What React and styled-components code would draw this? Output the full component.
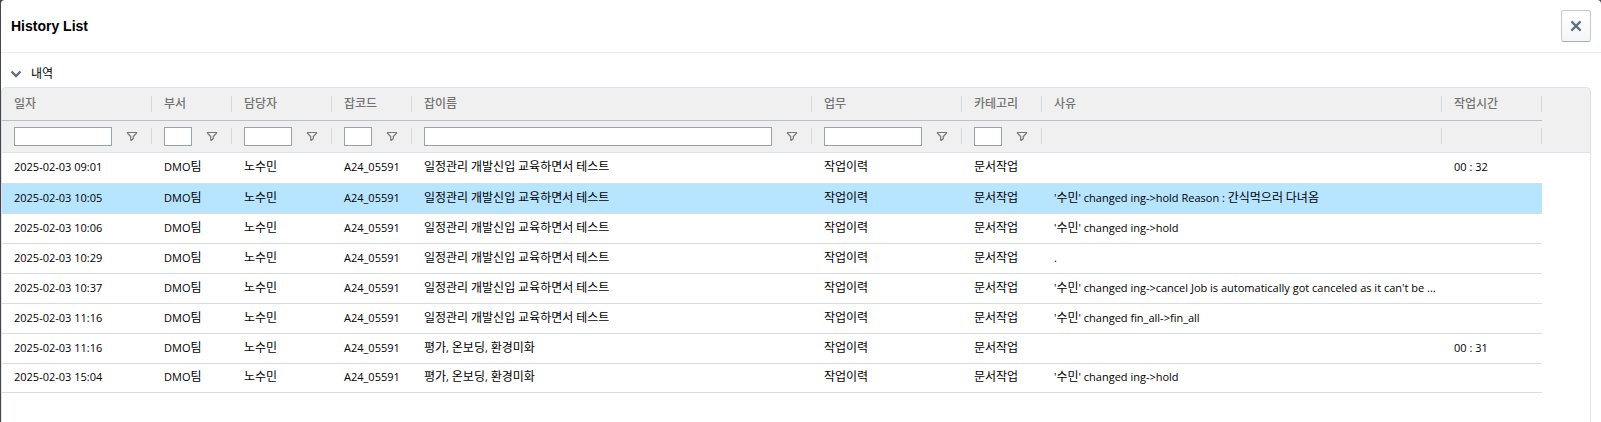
import React from "react";
import styled, { createGlobalStyle } from "styled-components";

const GlobalStyle = createGlobalStyle`
  * { box-sizing: border-box; }
  body {
    margin: 0;
    background: #45474d;
    font-family: "Open Sans", "Noto Sans CJK KR", sans-serif;
    font-size: 11px;
    color: #000;
  }
`;

const Dialog = styled.section`
  min-height: 100vh;
  margin-left: 1px;
  background: #fff;
  border-radius: 4px 4px 0 0;
  display: flex;
  flex-direction: column;
`;

const DialogHeader = styled.header`
  display: flex;
  align-items: center;
  justify-content: space-between;
  height: 53px;
  padding: 0 10px;
  border-bottom: 1px solid #edeeef;
`;

const DialogTitle = styled.h1`
  margin: 0;
  font: bold 14px "Liberation Sans", sans-serif;
`;

const CloseButton = styled.button`
  display: flex;
  align-items: center;
  justify-content: center;
  width: 30px;
  height: 32px;
  padding: 0;
  border: 1px solid #c4c7cb;
  border-bottom-color: #abadb3;
  border-radius: 3px;
  background: linear-gradient(#fff, #f3f6f8);
`;

const SectionToggle = styled.button`
  display: flex;
  align-items: center;
  align-self: flex-start;
  gap: 9px;
  height: 34px;
  padding: 8px 9px 0;
  border: 0;
  background: none;
  font-family: inherit;
  font-size: 12px;
  line-height: 16px;
  color: #000;
`;

const Grid = styled.div`
  flex: 1;
  margin-right: 10px;
  border: 1px solid #dde2eb;
  border-bottom: 0;
  border-radius: 5px 5px 0 0;
  overflow: hidden;
  background: linear-gradient(#f0f0f0, #f0f0f0) top / 100% 64px no-repeat,
    linear-gradient(#dde2eb, #dde2eb) 0 64px / 100% 1px no-repeat;
`;

const Table = styled.table`
  width: 1540px;
  table-layout: fixed;
  border-collapse: separate;
  border-spacing: 0;
`;

const HeadCell = styled.th`
  height: 32px;
  padding: 0 12px;
  text-align: left;
  font-size: 12px;
  font-weight: 500;
  line-height: 16px;
  color: #737373;
  background: linear-gradient(#d3d6da, #d3d6da) right center / 1px 16px no-repeat;
`;

const FilterCell = styled.td`
  height: 33px;
  padding: 0 12px;
  border-top: 1px solid #babfc7;
  border-bottom: 1px solid #dde2eb;
  background: linear-gradient(#d3d6da, #d3d6da) right 7px / 1px 16px no-repeat;
`;

const FilterGroup = styled.div`
  display: flex;
  align-items: center;
  gap: 12px;
`;

const FilterInput = styled.input`
  flex: 1;
  min-width: 0;
  height: 19px;
  padding: 0 4px;
  border: 1px solid #95a5a6;
  border-radius: 0;
  background: #fff;
  font: inherit;
`;

const FilterButton = styled.button`
  display: flex;
  align-items: center;
  justify-content: center;
  width: 16px;
  height: 16px;
  padding: 0;
  border: 0;
  background: none;
`;

const Row = styled.tr`
  background: ${(p) => (p.$selected ? "#b7e4ff" : "#fff")};
`;

const Cell = styled.td`
  height: 30px;
  padding: 0 4px 2px 12px;
  border-top: ${(p) => (p.$first ? "0" : "1px solid #d9dcde")};
  line-height: 16px;
  white-space: nowrap;
  overflow: hidden;
  text-overflow: ellipsis;
  ${Row}:last-child & { border-bottom: 1px solid #d9dcde; }
`;

const Hangul = styled.span`
  font-size: 12px;
`;

const MixedText = ({ text }) =>
  text
    .split(/([가-힣]+)/)
    .map((part, i) => (i % 2 ? <Hangul key={i}>{part}</Hangul> : part));

const FunnelIcon = () => (
  <svg width="12" height="12" viewBox="0 0 12 12" fill="none" stroke="#777" aria-hidden="true">
    <path d="M.8 1.500h10.400M1.300 2L4.700 5.500v4M10.700 2L7.300 5.500v2.300L4.700 9.800" strokeWidth="1.200" />
  </svg>
);

const COLUMNS = [
  { label: "일자", width: 150, filter: true },
  { label: "부서", width: 80, filter: true },
  { label: "담당자", width: 100, filter: true },
  { label: "잡코드", width: 80, filter: true },
  { label: "잡이름", width: 400, filter: true },
  { label: "업무", width: 150, filter: true },
  { label: "카테고리", width: 80, filter: true },
  { label: "사유", width: 400 },
  { label: "작업시간", width: 100 },
];

const EDU = "일정관리 개발신입 교육하면서 테스트";
const EVAL = "평가, 온보딩, 환경미화";

const RECORDS = [
  ["2025-02-03 09:01", EDU, "", "00 : 32"],
  ["2025-02-03 10:05", EDU, "'수민' changed ing->hold Reason : 간식먹으러 다녀옴", ""],
  ["2025-02-03 10:06", EDU, "'수민' changed ing->hold", ""],
  ["2025-02-03 10:29", EDU, ".", ""],
  ["2025-02-03 10:37", EDU, "'수민' changed ing->cancel Job is automatically got canceled as it can't be ...", ""],
  ["2025-02-03 11:16", EDU, "'수민' changed fin_all->fin_all", ""],
  ["2025-02-03 11:16", EVAL, "", "00 : 31"],
  ["2025-02-03 15:04", EVAL, "'수민' changed ing->hold", ""],
];
const SELECTED = 1;

export default function App() {
  return (
    <>
      <GlobalStyle />
      <Dialog role="dialog" aria-labelledby="dialog-title">
        <DialogHeader>
          <DialogTitle id="dialog-title">History List</DialogTitle>
          <CloseButton type="button" aria-label="Close">
            <svg width="12" height="12" viewBox="0 0 12 12" stroke="#5d6f80" strokeWidth="2.200" aria-hidden="true">
              <path d="M1.400 1.400l9.200 9.200M10.600 1.400l-9.200 9.200" />
            </svg>
          </CloseButton>
        </DialogHeader>
        <SectionToggle type="button" aria-expanded="true">
          <svg width="12" height="8" viewBox="0 0 12 8" fill="none" stroke="#5d6f80" strokeWidth="2.400" aria-hidden="true">
            <path d="M1.500 1.500L6 6l4.500-4.500" />
          </svg>
          내역
        </SectionToggle>
        <Grid>
          <Table>
            <colgroup>
              {COLUMNS.map((c) => (
                <col key={c.label} width={c.width} />
              ))}
            </colgroup>
            <thead>
              <tr>
                {COLUMNS.map((c) => (
                  <HeadCell key={c.label} scope="col">{c.label}</HeadCell>
                ))}
              </tr>
              <tr>
                {COLUMNS.map((c) => (
                  <FilterCell key={c.label}>
                    {c.filter && (
                      <FilterGroup>
                        <FilterInput type="text" aria-label={`${c.label} filter`} />
                        <FilterButton type="button" aria-label={`${c.label} filter menu`}>
                          <FunnelIcon />
                        </FilterButton>
                      </FilterGroup>
                    )}
                  </FilterCell>
                ))}
              </tr>
            </thead>
            <tbody>
              {RECORDS.map(([date, job, reason, time], i) => (
                <Row key={i} $selected={i === SELECTED}>
                  {[date, "DMO팀", "노수민", "A24_05591", job, "작업이력", "문서작업", reason, time].map((text, j) => (
                    <Cell key={j} $first={i === 0}>
                      <MixedText text={text} />
                    </Cell>
                  ))}
                </Row>
              ))}
            </tbody>
          </Table>
        </Grid>
      </Dialog>
    </>
  );
}
